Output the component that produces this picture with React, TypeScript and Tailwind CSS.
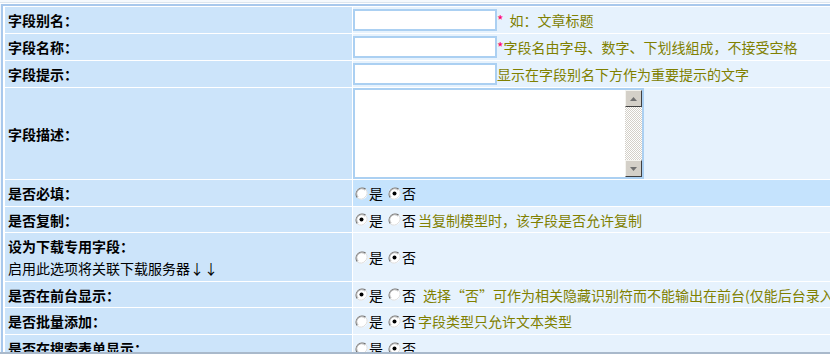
import React from "react";

function Radio({ checked }: { checked?: boolean }) {
  return (
    <svg width="13" height="13" viewBox="0 0 13 13" className="shrink-0">
      <circle cx="6.5" cy="6.5" r="6" fill="#ffffff" />
      <path d="M10.7 2.3 A6 6 0 0 0 2.3 10.7" fill="none" stroke="#707070" strokeWidth="1.2" />
      <path d="M9.9 3.1 A4.8 4.8 0 0 0 3.1 9.9" fill="none" stroke="#b0b0b0" strokeWidth="1" />
      <path d="M2.3 10.7 A6 6 0 0 0 10.7 2.3" fill="none" stroke="#dcdcdc" strokeWidth="1" />
      {checked && <circle cx="6.5" cy="6.5" r="2" fill="#000000" />}
    </svg>
  );
}

function YesNo({ yes, hint, gap }: { yes: boolean; hint?: string; gap?: boolean }) {
  return (
    <div className="flex items-center pl-[2px] text-black">
      <Radio checked={yes} />
      <span className="ml-px">是</span>
      <span className="ml-[5px] flex items-center">
        <Radio checked={!yes} />
      </span>
      <span className="ml-px">否</span>
      {hint && (
        <span className={(gap ? "ml-[7px] " : "ml-[2px] ") + "text-[#808000] whitespace-nowrap"}>{hint}</span>
      )}
    </div>
  );
}

function Label({ children, h }: { children: React.ReactNode; h: string }) {
  return (
    <div className={"bg-[#cce4fa] flex flex-col justify-center pl-[3px] font-bold text-black " + h}>
      {children}
    </div>
  );
}

function TextInput() {
  return <div className="w-[144px] h-[22px] bg-white border-2 border-[#abd0f2] shrink-0" />;
}

function ScrollBtn({ up }: { up: boolean }) {
  return (
    <div className="w-[17px] h-[17px] bg-[#d4d0c8] border-t border-l border-t-[#f4f3ee] border-l-[#f4f3ee] border-r border-b border-r-[#404040] border-b-[#404040] flex items-center justify-center">
      <svg width="7" height="4" viewBox="0 0 7 4">
        {up ? <path d="M0 4 L3.5 0 L7 4 Z" fill="#707070" /> : <path d="M0 0 L3.5 4 L7 0 Z" fill="#707070" />}
      </svg>
    </div>
  );
}

export default function App() {
  const font = "font-['SimSun','Noto_Sans_CJK_SC',sans-serif]";
  return (
    <div className={"w-[830px] h-[354px] overflow-hidden bg-[#f2f7fc] text-[14px] leading-[16px] " + font}>
      <div className="h-[2px] bg-[#f5f9fd]" />
      <div className="h-px bg-[#dde6ef]" />
      <div className="h-px bg-white" />
      <div className="ml-px h-[348px] overflow-hidden border-l-2 border-t-2 border-[#a8c8ec] bg-white pl-[2px] pt-px">
        <div className="grid grid-cols-[347px_620px] gap-px bg-white">
          <Label h="h-[26px]">字段别名：</Label>
          <div className="bg-[#e6f2fd] flex items-center">
            <TextInput />
            <span className="text-[#ff0066]">*</span>
            <span className="ml-[6px] text-[#808000]">如：文章标题</span>
          </div>

          <Label h="h-[26px]">字段名称：</Label>
          <div className="bg-[#e6f2fd] flex items-center">
            <TextInput />
            <span className="text-[#ff0066]">*</span>
            <span className="text-[#808000] whitespace-nowrap">字段名由字母、数字、下划线組成，不接受空格</span>
          </div>

          <Label h="h-[26px]">字段提示：</Label>
          <div className="bg-[#e6f2fd] flex items-center">
            <TextInput />
            <span className="text-[#808000] whitespace-nowrap">显示在字段别名下方作为重要提示的文字</span>
          </div>

          <Label h="h-[91px]">字段描述：</Label>
          <div className="bg-[#e6f2fd] flex items-start">
            <div className="w-[291px] h-[91px] bg-white border-2 border-[#abd0f2] flex justify-end">
              <div className="w-[17px] h-full flex flex-col bg-[repeating-conic-gradient(#d4d0c8_0%_25%,#ffffff_0%_50%)] bg-[length:2px_2px]">
                <ScrollBtn up />
                <div className="flex-1" />
                <ScrollBtn up={false} />
              </div>
            </div>
          </div>

          <Label h="h-[26px]">是否必填：</Label>
          <div className="bg-[#c5e3fd] flex items-center">
            <YesNo yes={false} />
          </div>

          <Label h="h-[25px]">是否复制：</Label>
          <div className="bg-[#e6f2fd] flex items-center">
            <YesNo yes={true} hint="当复制模型时，该字段是否允许复制" />
          </div>

          <Label h="h-[48px]">
            <div>设为下载专用字段：</div>
            <div className="font-normal mt-[6px]">启用此选项将关联下载服务器↓↓</div>
          </Label>
          <div className="bg-[#e6f2fd] flex items-center">
            <YesNo yes={false} />
          </div>

          <Label h="h-[25px]">是否在前台显示：</Label>
          <div className="bg-[#e6f2fd] flex items-center">
            <YesNo yes={true} gap hint="选择“否”可作为相关隐藏识别符而不能输出在前台(仅能后台录入)" />
          </div>

          <Label h="h-[26px]">是否批量添加：</Label>
          <div className="bg-[#e6f2fd] flex items-center">
            <YesNo yes={false} hint="字段类型只允许文本类型" />
          </div>

          <Label h="h-[26px]">是否在搜索表单显示：</Label>
          <div className="bg-[#e6f2fd] flex items-center">
            <YesNo yes={false} />
          </div>
        </div>
      </div>
      <div className="h-[2px] bg-[#a9b9cb]" />
    </div>
  );
}
